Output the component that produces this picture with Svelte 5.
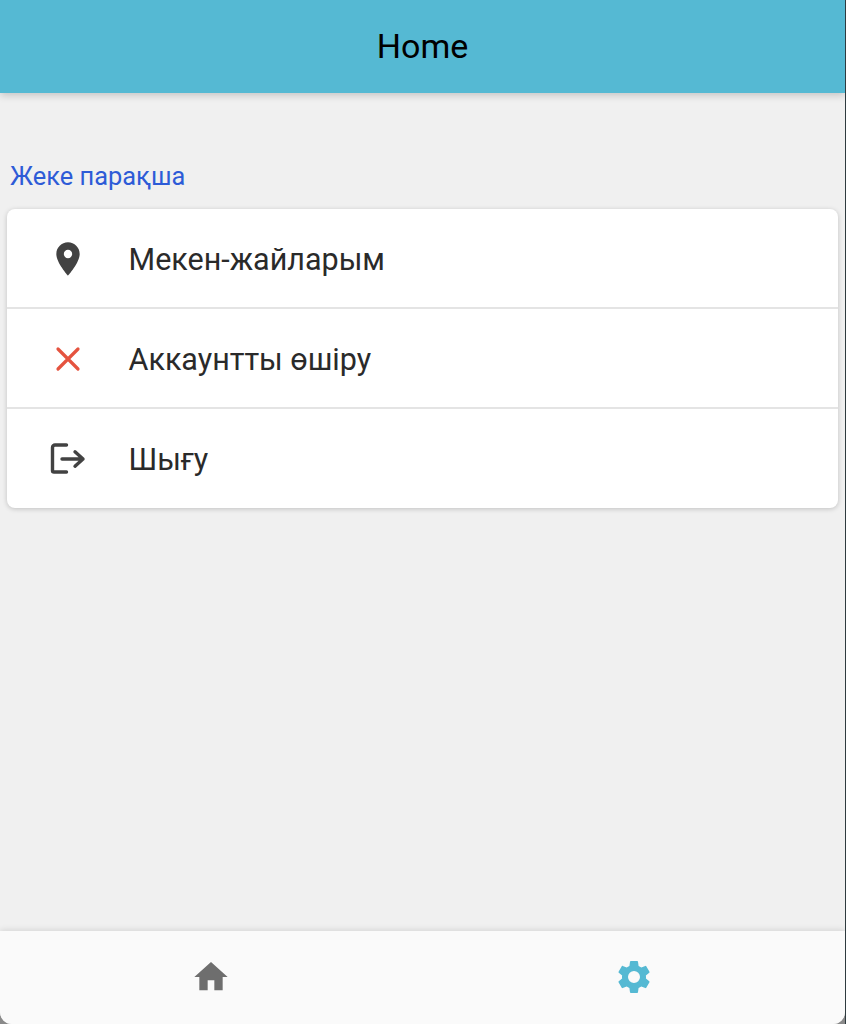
<script>
  const rows = [
    { label: 'Мекен-жайларым', icon: 'pin' },
    { label: 'Аккаунтты өшіру', icon: 'close' },
    { label: 'Шығу', icon: 'logout' }
  ];
</script>

<div class="frame">
  <div class="screen">
    <header class="bar">Home</header>
    <main class="content">
      <h2 class="section">Жеке парақша</h2>
      <section class="card">
        {#each rows as row}
          <div class="row">
            <span class="icon">
              {#if row.icon === 'pin'}
                <svg width="40" height="40" viewBox="0 0 24 24"><path fill="#424242" d="M12 2C8.130 2 5 5.130 5 9c0 5.250 7 13 7 13s7-7.750 7-13c0-3.870-3.130-7-7-7zm0 9.500a2.500 2.500 0 1 1 0-5 2.500 2.500 0 0 1 0 5z"/></svg>
              {:else if row.icon === 'close'}
                <svg width="40" height="40" viewBox="0 0 40 40"><path fill="none" stroke="#e5533f" stroke-width="3.200" stroke-linecap="round" d="M10 10l20 20M30 10L10 30"/></svg>
              {:else}
                <svg width="40" height="40" viewBox="0 0 40 40"><path fill="none" stroke="#424242" stroke-width="3.400" stroke-linecap="round" stroke-linejoin="round" d="M18.500 6H7A2.500 2.500 0 0 0 4.500 8.500v23A1.500 1.500 0 0 0 6 33h12.500M14 20h21M27 12.800L35 20l-8 7.200"/></svg>
              {/if}
            </span>
            <span class="label">{row.label}</span>
          </div>
        {/each}
      </section>
    </main>
    <nav class="tabs">
      <div class="tab">
        <svg width="40" height="40" viewBox="0 0 24 24"><path fill="#6e6e6e" d="M10 20v-6h4v6h5v-8h3L12 3 2 12h3v8z"/></svg>
      </div>
      <div class="tab">
        <svg width="40" height="40" viewBox="0 0 24 24"><path fill="#55b9d3" d="M19.140 12.940c.04-.3.060-.61.060-.94 0-.32-.020-.64-.070-.94l2.030-1.580a.49.49 0 0 0 .12-.61l-1.920-3.320a.488.488 0 0 0-.59-.22l-2.390.96c-.5-.38-1.030-.7-1.620-.94l-.36-2.540a.484.484 0 0 0-.48-.41h-3.840c-.24 0-.43.17-.47.41l-.36 2.540c-.59.24-1.130.57-1.620.94l-2.390-.96c-.22-.08-.47 0-.59.22L2.740 8.870c-.12.21-.08.47.12.61l2.030 1.580c-.05.3-.09.63-.09.94s.020.64.070.94l-2.030 1.580a.49.49 0 0 0-.12.61l1.920 3.320c.12.22.37.29.59.22l2.390-.96c.5.38 1.030.7 1.620.94l.36 2.540c.05.24.24.41.48.41h3.840c.24 0 .44-.17.47-.41l.36-2.540c.59-.24 1.130-.56 1.620-.94l2.390.96c.22.08.47 0 .59-.22l1.920-3.320c.12-.22.07-.47-.12-.61l-2.010-1.580zM12 15.600A3.600 3.600 0 1 1 12 8.400a3.600 3.600 0 0 1 0 7.200z"/></svg>
      </div>
    </nav>
  </div>
</div>

<style>
  :global(body) {
    margin: 0;
    background: #8a8a8a;
  }
  .frame {
    width: 846px;
    height: 1024px;
    background: #8a8a8a;
    box-sizing: border-box;
    border-right: 1px solid #2f3b3f;
  }
  .screen {
    height: 100%;
    display: flex;
    flex-direction: column;
    background: #f0f0f0;
    border-radius: 0 0 12px 12px;
    overflow: hidden;
    font-family: Roboto, "Noto Sans", sans-serif;
  }
  .bar {
    flex: none;
    height: 93px;
    display: flex;
    align-items: center;
    justify-content: center;
    background: #55b9d3;
    color: #000;
    font-size: 34px;
    padding-bottom: 1px;
    box-sizing: border-box;
    box-shadow: 0 2px 8px rgba(0, 0, 0, 0.2);
    position: relative;
  }
  .content {
    flex: 1;
    padding: 0 7px;
  }
  .section {
    margin: 0;
    padding: 66px 0 0 3px;
    height: 50px;
    font-weight: 400;
    font-size: 25.400px;
    line-height: 34px;
    color: #2d5bd7;
  }
  .card {
    background: #fff;
    border-radius: 8px;
    box-shadow: 0 1px 5px rgba(0, 0, 0, 0.2);
  }
  .row {
    height: 100px;
    box-sizing: border-box;
    display: flex;
    align-items: center;
    border-bottom: 2px solid #e4e4e4;
    padding-top: 1px;
  }
  .row:last-child {
    border-bottom: 0;
    height: 99px;
  }
  .icon {
    flex: none;
    width: 40px;
    height: 40px;
    margin: 0 41px 0 40.500px;
  }
  .icon svg {
    display: block;
  }
  .label {
    font-size: 30.500px;
    color: #2a2a2a;
    padding-top: 1px;
  }
  .tabs {
    flex: none;
    height: 93px;
    display: flex;
    background: #fafafa;
    box-shadow: 0 -1px 6px rgba(0, 0, 0, 0.12);
    position: relative;
  }
  .tab {
    flex: 1;
    display: flex;
    align-items: center;
    justify-content: center;
    padding-bottom: 2px;
  }
</style>
